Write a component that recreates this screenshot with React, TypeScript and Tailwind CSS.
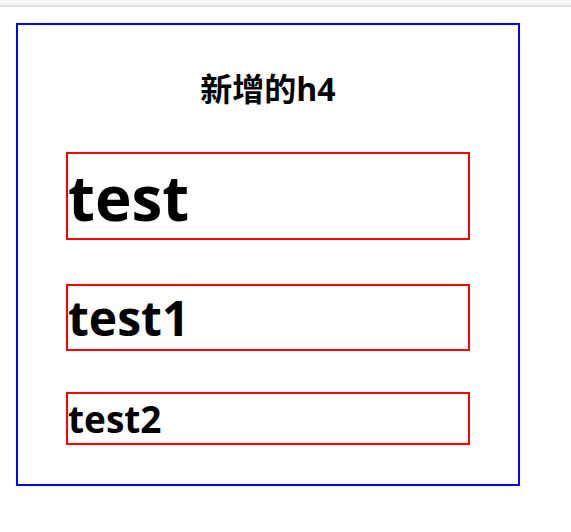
const font = "font-['Open_Sans','Noto_Sans_CJK_SC',sans-serif]";

export default function App() {
  return (
    <div className={`min-h-[532px] bg-white text-black ${font}`}>
      {/* browser chrome edge at the top */}
      <div className="h-[5px] bg-[#f8f8f8]" />
      <div className="h-[2px] bg-[#dfdfdf]" />
      <div className="p-4">
        <div className="flex w-[504px] flex-col border-2 border-[#0000ff] px-12 pb-[39px]">
          <h4 className="mt-[43px] mb-[42px] text-center text-[32px] leading-[42px] font-bold">
            新增的h4
          </h4>
          <h1 className="h-[88px] border-2 border-[#ff0000] pt-[3px] text-[62px] leading-[81px] font-bold">
            test
          </h1>
          <h2 className="mt-[44px] h-[67px] border-2 border-[#ff0000] pt-[1px] text-[48px] leading-[62px] font-bold">
            test1
          </h2>
          <h3 className="mt-[41px] h-[53px] border-2 border-[#ff0000] pt-[1px] text-[37px] leading-[48px] font-bold">
            test2
          </h3>
        </div>
      </div>
    </div>
  );
}
